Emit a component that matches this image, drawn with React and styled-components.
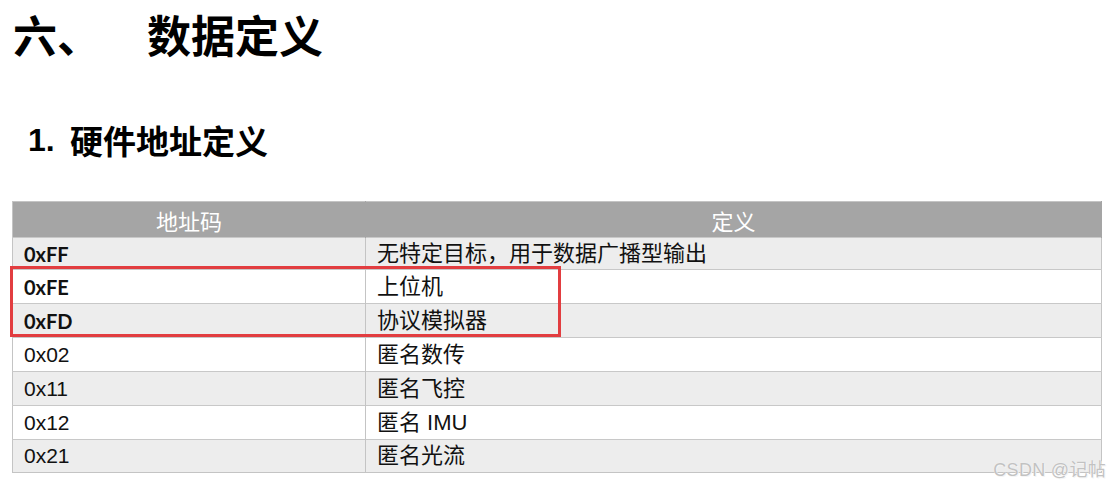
import React from "react";
import styled, { createGlobalStyle } from "styled-components";

const Global = createGlobalStyle`
  html, body { margin: 0; padding: 0; background: #ffffff; }
  body { font-family: "Noto Sans CJK SC", "Noto Sans", sans-serif; color: #000; }
`;

const Page = styled.div`
  position: relative;
  width: 1110px;
  height: 492px;
  overflow: hidden;
  box-sizing: border-box;
  padding: 0 8px 0 12px;
`;

const Title = styled.h1`
  margin: 0;
  display: flex;
  align-items: center;
  height: 68px;
  padding-left: 1px;
  font-size: 44px;
  line-height: 68px;
  font-weight: 700;
  font-family: "Noto Sans CJK SC", sans-serif;
`;

const TitleNum = styled.span`
  width: 134px;
`;

const SubTitle = styled.h2`
  margin: 50px 0 0 0;
  display: flex;
  align-items: center;
  height: 44px;
  line-height: 44px;
  font-size: 33px;
  font-weight: 700;
  font-family: "Noto Sans CJK SC", sans-serif;
`;

const SubNum = styled.span`
  width: 58px;
  padding-left: 16px;
  box-sizing: border-box;
  font-family: "Liberation Sans", Arial, sans-serif;
  font-size: 32px;
`;

const TableWrap = styled.div`
  position: relative;
  margin-top: 39px;
  width: 1090px;
`;

const Table = styled.table`
  width: 100%;
  border-collapse: collapse;
  table-layout: fixed;
  border: 1px solid #c4c4c4;
`;

const HeadCell = styled.th`
  height: 35px;
  padding: 0;
  line-height: 24px;
  background: #a5a5a5;
  color: #ffffff;
  font-weight: 400;
  font-size: 22px;
  font-family: "Noto Sans CJK SC", sans-serif;
  text-align: center;
  border-right: 1px solid #a5a5a5;
`;

const Row = styled.tr`
  background: ${(p) => (p.$shade ? "#ededed" : "#ffffff")};
`;

const CodeCell = styled.td`
  padding: 0 0 0 11px;
  line-height: 24px;
  border-top: 1px solid #c8c8c8;
  border-right: 1px solid #c4c4c4;
  font-size: ${(p) => (p.$bold ? "20px" : "21px")};
  font-weight: ${(p) => (p.$bold ? 700 : 400)};
  font-family: ${(p) =>
    p.$bold ? `"Lato", "Liberation Sans", sans-serif` : `"Liberation Sans", Arial, sans-serif`};
  color: #111;
  vertical-align: middle;
`;

const DefCell = styled.td`
  padding: 0 0 0 11px;
  line-height: 24px;
  border-top: 1px solid #c8c8c8;
  font-size: 22px;
  font-family: "Liberation Sans", "Noto Sans CJK SC", sans-serif;
  color: #111;
  vertical-align: middle;
  white-space: nowrap;
`;

const Highlight = styled.div`
  position: absolute;
  left: -2px;
  top: 65px;
  width: 551px;
  height: 71px;
  box-sizing: border-box;
  border: 3px solid #e23d40;
  pointer-events: none;
`;

const Watermark = styled.div`
  position: absolute;
  right: 4px;
  bottom: 11px;
  font-size: 18px;
  font-family: "Liberation Sans", "Noto Sans CJK SC", sans-serif;
  color: #c2c2c2;
  letter-spacing: 0.3px;
  text-shadow: 0 0 1px #fff, 1px 1px 0 #f4f4f4;
`;

const rows = [
  { code: "0xFF", def: "无特定目标，用于数据广播型输出", bold: true, h: 32 },
  { code: "0xFE", def: "上位机", bold: true, h: 34 },
  { code: "0xFD", def: "协议模拟器", bold: true, h: 34 },
  { code: "0x02", def: "匿名数传", h: 34 },
  { code: "0x11", def: "匿名飞控", h: 34 },
  { code: "0x12", def: "匿名 IMU", h: 34 },
  { code: "0x21", def: "匿名光流", h: 33 },
];

export default function App() {
  return (
    <>
      <Global />
      <Page>
        <Title>
          <TitleNum>六、</TitleNum>
          <span>数据定义</span>
        </Title>
        <SubTitle>
          <SubNum>1.</SubNum>
          <span>硬件地址定义</span>
        </SubTitle>
        <TableWrap>
          <Table>
            <colgroup>
              <col style={{ width: "353px" }} />
              <col />
            </colgroup>
            <thead>
              <tr>
                <HeadCell>地址码</HeadCell>
                <HeadCell>定义</HeadCell>
              </tr>
            </thead>
            <tbody>
              {rows.map((r, i) => (
                <Row key={r.code} $shade={i % 2 === 0} style={{ height: r.h }}>
                  <CodeCell $bold={r.bold}>{r.code}</CodeCell>
                  <DefCell>{r.def}</DefCell>
                </Row>
              ))}
            </tbody>
          </Table>
          <Highlight />
        </TableWrap>
        <Watermark>CSDN @记帖</Watermark>
      </Page>
    </>
  );
}
